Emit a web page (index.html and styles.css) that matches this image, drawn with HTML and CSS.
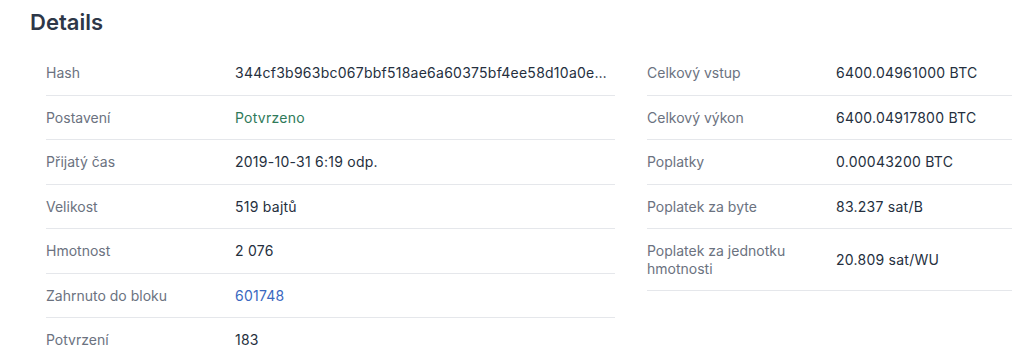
FILE: index.html
```html
<!DOCTYPE html>
<html lang="cs">
<head>
    <meta charset="UTF-8">
    <meta name="viewport" content="width=device-width, initial-scale=1.0">
    <title>Details</title>
    <link rel="stylesheet" href="styles.css">
</head>
<body>
    <section class="details">
        <h2>Details</h2>
        <div class="columns">
            <div class="table">
                <div class="row">
                    <span class="label">Hash</span>
                    <span class="value truncate">344cf3b963bc067bbf518ae6a60375bf4ee58d10a0e8f4a1c2b7d93e05f6a1b2</span>
                </div>
                <div class="row">
                    <span class="label">Postavení</span>
                    <span class="value confirmed">Potvrzeno</span>
                </div>
                <div class="row">
                    <span class="label">Přijatý čas</span>
                    <span class="value">2019-10-31 6:19 odp.</span>
                </div>
                <div class="row">
                    <span class="label">Velikost</span>
                    <span class="value">519 bajtů</span>
                </div>
                <div class="row">
                    <span class="label">Hmotnost</span>
                    <span class="value">2 076</span>
                </div>
                <div class="row">
                    <span class="label">Zahrnuto do bloku</span>
                    <a class="value link" href="#">601748</a>
                </div>
                <div class="row">
                    <span class="label">Potvrzení</span>
                    <span class="value">183</span>
                </div>
            </div>
            <div class="table">
                <div class="row">
                    <span class="label">Celkový vstup</span>
                    <span class="value">6400.04961000 BTC</span>
                </div>
                <div class="row">
                    <span class="label">Celkový výkon</span>
                    <span class="value">6400.04917800 BTC</span>
                </div>
                <div class="row">
                    <span class="label">Poplatky</span>
                    <span class="value">0.00043200 BTC</span>
                </div>
                <div class="row">
                    <span class="label">Poplatek za byte</span>
                    <span class="value">83.237 sat/B</span>
                </div>
                <div class="row">
                    <span class="label">Poplatek za jednotku hmotnosti</span>
                    <span class="value">20.809 sat/WU</span>
                </div>
            </div>
        </div>
    </section>
</body>
</html>
```

FILE: styles.css
```css
body {
    font-family: Inter, "Noto Sans", sans-serif;
    margin: 0;
    padding: 0;
    background: #fff;
    overflow: hidden;
}

.details {
    padding: 8px 30px;
}

.details h2 {
    margin: 0 0 15px;
    font-size: 22px;
    line-height: 28px;
    font-weight: 600;
    color: #2d3748;
}

.columns {
    display: grid;
    grid-template-columns: 601px 601px;
}

.table {
    padding: 0 16px;
}

.row {
    display: flex;
    align-items: center;
    padding: 13px 0;
    border-bottom: 1px solid #e5e7eb;
    font-size: 14px;
    line-height: 17.5px;
}

.label {
    flex: 0 0 189px;
    padding-right: 16px;
    box-sizing: border-box;
    color: #6b7280;
}

.value {
    flex: 1;
    min-width: 0;
    color: #252f3e;
    letter-spacing: 0.25px;
}

.truncate {
    white-space: nowrap;
    overflow: hidden;
    text-overflow: ellipsis;
    padding-right: 8px;
}

.confirmed {
    color: #2f7a5a;
}

.link {
    color: #3a68c0;
    text-decoration: none;
}
```
